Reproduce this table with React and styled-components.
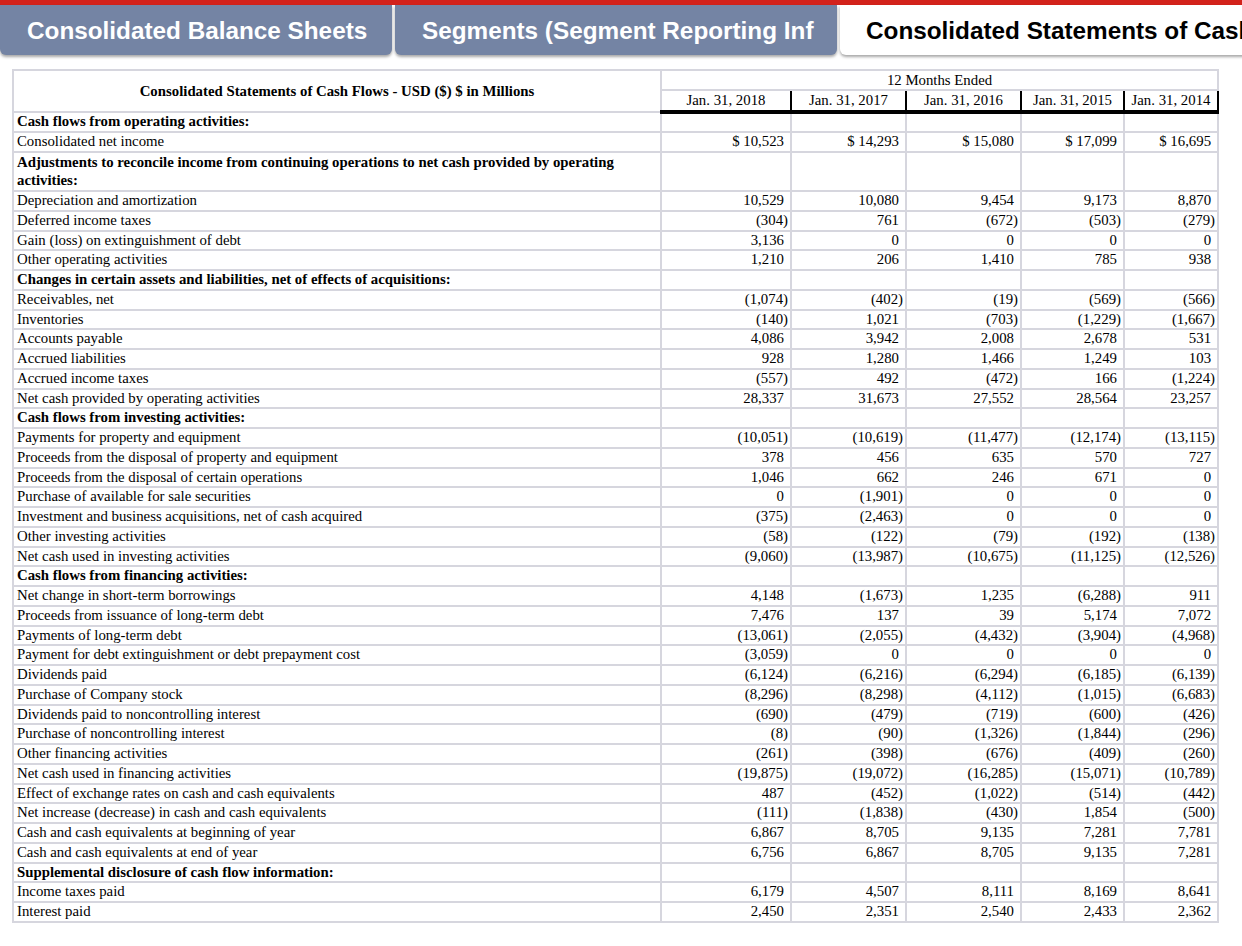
import React from 'react'
import styled, { createGlobalStyle } from 'styled-components'

const GlobalStyle = createGlobalStyle`
  html, body {
    margin: 0;
    padding: 0;
    background: #fff;
    overflow: hidden;
  }
`

const StyledPage = styled.div`
  width: 1242px;
  height: 946px;
  overflow: hidden;
  background: #fff;
`

const StyledTabBar = styled.div`
  display: flex;
  gap: 3px;
  height: 50px;
  border-top: 5px solid #d3221b;
  white-space: nowrap;
`

const StyledTab = styled.div`
  flex: none;
  display: flex;
  align-items: center;
  width: ${props => props.width}px;
  height: 50px;
  padding: 1px 0 0 ${props => props.active ? 26 : 27}px;
  box-sizing: border-box;
  overflow: hidden;
  background: ${props => props.active ? '#fff' : '#7484a4'};
  color: ${props => props.active ? '#000' : '#fff'};
  border-radius: 0 0 6px 6px;
  box-shadow: 0 2px 3px rgba(0, 0, 0, 0.35);
  font-family: "Liberation Sans", Arial, sans-serif;
  font-size: 24.3px;
  font-weight: 700;
`

const StyledWrap = styled.div`
  padding: 14px 0 0 12px;
`

const StyledTable = styled.table`
  width: 1205px;
  table-layout: fixed;
  border-collapse: collapse;
  font-family: "Liberation Serif", "Times New Roman", serif;
  font-size: 14.8px;
  color: #000;
  border: 2px solid #d6d6de;
`

const StyledTitle = styled.th`
  border: 2px solid #d6d6de;
  font-weight: 700;
  text-align: center;
  vertical-align: middle;
  padding: 0 4px;
`

const StyledPeriod = styled.th`
  border: 2px solid #d6d6de;
  font-weight: 400;
  text-align: center;
  height: 18px;
  line-height: 18px;
  padding: 0;
`

const StyledDate = styled.th`
  border-top: 2px solid #d6d6de;
  border-right: 2px solid #000;
  border-bottom: 4px solid #000;
  font-weight: 400;
  text-align: center;
  height: 19px;
  line-height: 18px;
  padding: 0;
  vertical-align: top;
`

const StyledLabel = styled.td`
  border: 2px solid #d6d6de;
  padding: 0 3px;
  line-height: ${props => props.wrap ? 18.75 : 17.75}px;
  font-weight: ${props => props.bold ? 700 : 400};
  vertical-align: top;
`

const StyledNum = styled.td`
  border: 2px solid #d6d6de;
  text-align: right;
  white-space: nowrap;
  line-height: 17.75px;
  padding: 0 ${props => props.neg ? 2 : 6}px 0 2px;
  vertical-align: top;
`

const dates = ['Jan. 31, 2018', 'Jan. 31, 2017', 'Jan. 31, 2016', 'Jan. 31, 2015', 'Jan. 31, 2014']
const widths = [648, 130, 115, 115, 103, 94]

const rows = [
  ['Cash flows from operating activities:', null],
  ['Consolidated net income', ['$ 10,523', '$ 14,293', '$ 15,080', '$ 17,099', '$ 16,695']],
  ['Adjustments to reconcile income from continuing operations to net cash provided by operating activities:', null],
  ['Depreciation and amortization', ['10,529', '10,080', '9,454', '9,173', '8,870']],
  ['Deferred income taxes', ['(304)', '761', '(672)', '(503)', '(279)']],
  ['Gain (loss) on extinguishment of debt', ['3,136', '0', '0', '0', '0']],
  ['Other operating activities', ['1,210', '206', '1,410', '785', '938']],
  ['Changes in certain assets and liabilities, net of effects of acquisitions:', null],
  ['Receivables, net', ['(1,074)', '(402)', '(19)', '(569)', '(566)']],
  ['Inventories', ['(140)', '1,021', '(703)', '(1,229)', '(1,667)']],
  ['Accounts payable', ['4,086', '3,942', '2,008', '2,678', '531']],
  ['Accrued liabilities', ['928', '1,280', '1,466', '1,249', '103']],
  ['Accrued income taxes', ['(557)', '492', '(472)', '166', '(1,224)']],
  ['Net cash provided by operating activities', ['28,337', '31,673', '27,552', '28,564', '23,257']],
  ['Cash flows from investing activities:', null],
  ['Payments for property and equipment', ['(10,051)', '(10,619)', '(11,477)', '(12,174)', '(13,115)']],
  ['Proceeds from the disposal of property and equipment', ['378', '456', '635', '570', '727']],
  ['Proceeds from the disposal of certain operations', ['1,046', '662', '246', '671', '0']],
  ['Purchase of available for sale securities', ['0', '(1,901)', '0', '0', '0']],
  ['Investment and business acquisitions, net of cash acquired', ['(375)', '(2,463)', '0', '0', '0']],
  ['Other investing activities', ['(58)', '(122)', '(79)', '(192)', '(138)']],
  ['Net cash used in investing activities', ['(9,060)', '(13,987)', '(10,675)', '(11,125)', '(12,526)']],
  ['Cash flows from financing activities:', null],
  ['Net change in short-term borrowings', ['4,148', '(1,673)', '1,235', '(6,288)', '911']],
  ['Proceeds from issuance of long-term debt', ['7,476', '137', '39', '5,174', '7,072']],
  ['Payments of long-term debt', ['(13,061)', '(2,055)', '(4,432)', '(3,904)', '(4,968)']],
  ['Payment for debt extinguishment or debt prepayment cost', ['(3,059)', '0', '0', '0', '0']],
  ['Dividends paid', ['(6,124)', '(6,216)', '(6,294)', '(6,185)', '(6,139)']],
  ['Purchase of Company stock', ['(8,296)', '(8,298)', '(4,112)', '(1,015)', '(6,683)']],
  ['Dividends paid to noncontrolling interest', ['(690)', '(479)', '(719)', '(600)', '(426)']],
  ['Purchase of noncontrolling interest', ['(8)', '(90)', '(1,326)', '(1,844)', '(296)']],
  ['Other financing activities', ['(261)', '(398)', '(676)', '(409)', '(260)']],
  ['Net cash used in financing activities', ['(19,875)', '(19,072)', '(16,285)', '(15,071)', '(10,789)']],
  ['Effect of exchange rates on cash and cash equivalents', ['487', '(452)', '(1,022)', '(514)', '(442)']],
  ['Net increase (decrease) in cash and cash equivalents', ['(111)', '(1,838)', '(430)', '1,854', '(500)']],
  ['Cash and cash equivalents at beginning of year', ['6,867', '8,705', '9,135', '7,281', '7,781']],
  ['Cash and cash equivalents at end of year', ['6,756', '6,867', '8,705', '9,135', '7,281']],
  ['Supplemental disclosure of cash flow information:', null],
  ['Income taxes paid', ['6,179', '4,507', '8,111', '8,169', '8,641']],
  ['Interest paid', ['2,450', '2,351', '2,540', '2,433', '2,362']],
]

export default function App() {
  return (
    <StyledPage>
      <GlobalStyle />
      <StyledTabBar>
        <StyledTab width={392}>Consolidated Balance Sheets</StyledTab>
        <StyledTab width={442}>Segments (Segment Reporting Inf</StyledTab>
        <StyledTab width={420} active>Consolidated Statements of Cash Flows</StyledTab>
      </StyledTabBar>
      <StyledWrap>
        <StyledTable>
          <colgroup>
            {widths.map((w, i) => <col key={i} style={{ width: w }} />)}
          </colgroup>
          <thead>
            <tr>
              <StyledTitle rowSpan={2}>Consolidated Statements of Cash Flows - USD ($) $ in Millions</StyledTitle>
              <StyledPeriod colSpan={5}>12 Months Ended</StyledPeriod>
            </tr>
            <tr>
              {dates.map(d => <StyledDate key={d}>{d}</StyledDate>)}
            </tr>
          </thead>
          <tbody>
            {rows.map(([label, values]) => (
              <tr key={label}>
                <StyledLabel bold={!values} wrap={label.length > 90}>{label}</StyledLabel>
                {(values || ['', '', '', '', '']).map((v, i) => (
                  <StyledNum key={i} neg={v.startsWith('(')}>{v}</StyledNum>
                ))}
              </tr>
            ))}
          </tbody>
        </StyledTable>
      </StyledWrap>
    </StyledPage>
  )
}
